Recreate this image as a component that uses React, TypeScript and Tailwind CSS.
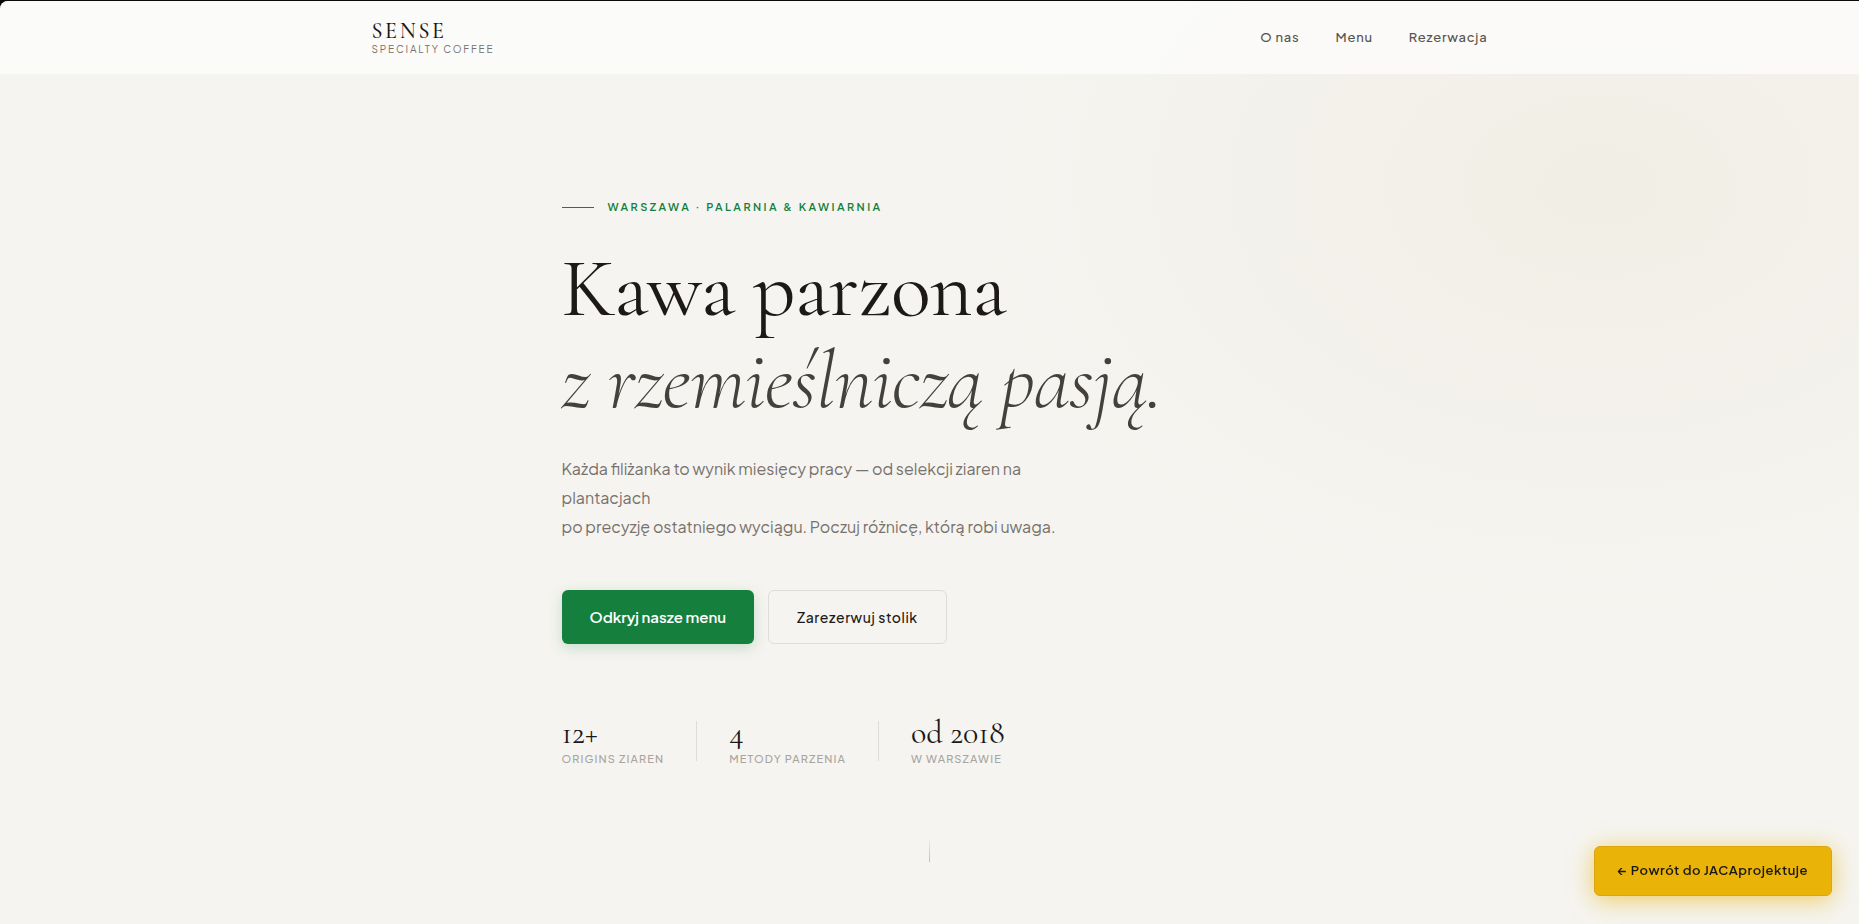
const SERIF = "font-['Cormorant_Garamond','Liberation_Serif',serif]";

const navItems = [
    { href: "#o-nas", label: "O nas" },
    { href: "#menu", label: "Menu" },
    { href: "#rezerwacja", label: "Rezerwacja" },
];

const stats = [
    { value: "12+", label: "Origins ziaren" },
    { value: "4", label: "Metody parzenia" },
    { value: "od 2018", label: "w Warszawie" },
];

function Header() {
    return (
        <header className="rounded-tl-lg bg-[#fbfbfa]/85">
            <div className="mx-auto flex h-[73px] w-full max-w-[1180px] items-center justify-between px-8">
                <a href="#top" className="flex flex-col">
                    <span className={`${SERIF} text-[22px] leading-[22px] font-medium tracking-[0.12em] text-[#1c1917]`}>SENSE</span>
                    <span className="text-[10px] leading-[14px] tracking-[0.18em] text-[#78716c] uppercase">Specialty Coffee</span>
                </a>
                <nav className="flex items-center gap-9">
                    {navItems.map(({ href, label }) => (
                        <a key={href} href={href} className="text-[13px] font-medium tracking-[0.06em] text-[#57534e]">
                            {label}
                        </a>
                    ))}
                </nav>
            </div>
        </header>
    );
}

function Hero() {
    return (
        <main className="flex flex-1 flex-col">
            <section className="mx-auto w-full max-w-[800px] px-8 pt-[125px]">
                <p className="flex items-center gap-[14px] text-[11px] leading-4 font-semibold tracking-[0.22em] text-[#15803d] uppercase">
                    <span className="h-px w-8 bg-[#15803d]" />
                    Warszawa · Palarnia &amp; Kawiarnia
                </p>

                <h1 className={`${SERIF} mt-7 text-[83px] leading-[92px] tracking-[-0.01em] text-[#1c1917]`}>
                    Kawa parzona
                    <em className="block font-light text-[#44403c]">z rzemieślniczą pasją.</em>
                </h1>

                <p className="mt-[27px] max-w-[520px] text-base leading-[29px] text-[#78716c]">
                    Każda filiżanka to wynik miesięcy pracy — od selekcji ziaren na plantacjach
                    <br />
                    po precyzję ostatniego wyciągu. Poczuj różnicę, którą robi uwaga.
                </p>

                <div className="mt-[49px] flex flex-wrap gap-[14px]">
                    <a
                        href="#menu"
                        className="flex h-[54px] items-center rounded-md bg-[#15803d] px-7 text-[15px] font-semibold text-white shadow-[0_4px_14px_rgba(21,128,61,0.2)]"
                    >
                        Odkryj nasze menu
                    </a>
                    <a
                        href="#rezerwacja"
                        className="flex h-[54px] items-center rounded-md border border-[#dedcd8] px-7 text-sm font-medium tracking-[0.04em] text-[#1c1917]"
                    >
                        Zarezerwuj stolik
                    </a>
                </div>

                <dl className="mt-[71px] flex items-center gap-8">
                    {stats.map(({ value, label }, i) => (
                        <div key={label} className="flex items-center gap-8">
                            {i > 0 && <span className="h-10 w-px bg-[#dedcd8]" />}
                            <div className="flex flex-col-reverse">
                                <dt className="text-[11px] leading-4 font-medium tracking-[0.1em] text-[#a8a5a0] uppercase">{label}</dt>
                                <dd className={`${SERIF} text-[32px] leading-9 text-[#1c1917]`}>{value}</dd>
                            </div>
                        </div>
                    ))}
                </dl>
            </section>

            <span className="mx-auto mt-[70px] h-[25px] w-px bg-linear-to-b from-transparent to-[#bfbcb8]" />
        </main>
    );
}

export default function App() {
    return (
        <div className="min-h-screen bg-[#0c0a09] pt-px font-['Plus_Jakarta_Sans',Inter,sans-serif]">
            <div
                id="top"
                className="flex min-h-[calc(100vh-1px)] flex-col rounded-tl-lg bg-[#f5f4f0] bg-[radial-gradient(ellipse_620px_420px_at_86%_20%,#f1eee5,#f5f4f000)]"
            >
                <Header />
                <Hero />
            </div>
            <a
                href="#powrot"
                className="fixed right-[27px] bottom-7 flex h-[50px] items-center rounded-md border border-[#dba50c] bg-[#eab308] px-[23px] text-[13px] font-semibold tracking-[0.04em] text-[#1c1917] shadow-[0_4px_24px_rgba(234,179,8,0.6)]"
            >
                ← Powrót do JACAprojektuje
            </a>
        </div>
    );
}
